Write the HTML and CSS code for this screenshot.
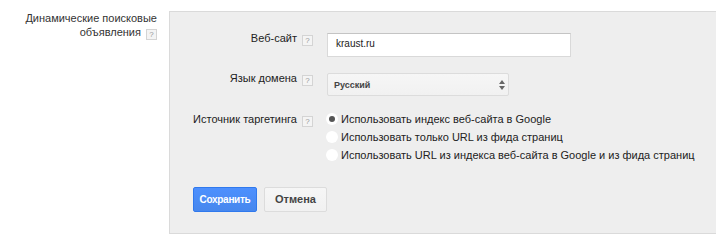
FILE: index.html
```html
<!DOCTYPE html>
<html lang="ru">
<head>
    <meta charset="UTF-8">
    <title>Динамические поисковые объявления</title>
    <link rel="stylesheet" href="styles.css">
</head>
<body>
    <div class="page">
        <div class="side-label">
            Динамические поисковые<br>
            объявления <span class="help">?</span>
        </div>

        <div class="panel">
            <div class="form-row">
                <div class="field-label">Веб-сайт <span class="help">?</span></div>
                <div class="text-input">kraust.ru</div>
            </div>

            <div class="form-row">
                <div class="field-label">Язык домена <span class="help">?</span></div>
                <div class="select">
                    <span>Русский</span>
                    <svg class="select-arrows" width="6" height="10" viewBox="0 0 6 10">
                        <path d="M3 0 L6 4 L0 4 Z" fill="#666"/>
                        <path d="M0 6 L6 6 L3 10 Z" fill="#666"/>
                    </svg>
                </div>
            </div>

            <div class="form-row row-radios">
                <div class="field-label tall">Источник таргетинга <span class="help">?</span></div>
                <div class="radios">
                    <div class="radio-item"><span class="radio checked"></span>Использовать индекс веб-сайта в Google</div>
                    <div class="radio-item"><span class="radio"></span>Использовать только URL из фида страниц</div>
                    <div class="radio-item"><span class="radio"></span>Использовать URL из индекса веб-сайта в Google и из фида страниц</div>
                </div>
            </div>

            <div class="buttons">
                <div class="btn btn-primary">Сохранить</div>
                <div class="btn btn-cancel">Отмена</div>
            </div>
        </div>
    </div>
</body>
</html>
```

FILE: styles.css
```css
body {
    margin: 0;
    background: #fff;
    font-family: 'Liberation Sans', Arial, sans-serif;
    font-size: 11px;
    color: #222;
}

.page {
    display: flex;
    align-items: flex-start;
}

.side-label {
    width: 157px;
    padding-right: 12px;
    margin-top: 11px;
    text-align: right;
    line-height: 14px;
    color: #333;
}

.help {
    display: inline-block;
    box-sizing: border-box;
    width: 11px;
    height: 11px;
    margin-left: 2px;
    border: 1px solid #d4d4d4;
    background: #f4f4f4;
    color: #999;
    font-size: 8px;
    line-height: 9px;
    text-align: center;
    vertical-align: -1px;
}

.panel {
    flex: 1;
    margin-top: 11px;
    background: #eeeeee;
    border: 1px solid #dadada;
    border-right: none;
    padding: 21px 0 21px 0;
}

.form-row {
    display: flex;
    align-items: flex-start;
    margin-bottom: 16px;
}

.row-radios {
    margin-top: -2px;
    margin-bottom: 23px;
}

.field-label {
    width: 143px;
    margin-top: -2px;
    text-align: right;
    line-height: 14px;
    flex-shrink: 0;
}

.field-label.tall {
    margin-top: 0;
    line-height: 18px;
}

.text-input {
    box-sizing: border-box;
    width: 244px;
    height: 24px;
    margin-left: 14px;
    padding-left: 8px;
    background: #fff;
    border: 1px solid #d9d9d9;
    border-top-color: #c4c4c4;
    font-size: 10px;
    line-height: 19px;
    color: #222;
}

.select {
    box-sizing: border-box;
    width: 182px;
    height: 23px;
    margin-left: 14px;
    padding: 0 3px 0 6px;
    display: flex;
    align-items: center;
    justify-content: space-between;
    background: linear-gradient(#f6f6f6, #f1f1f1);
    border: 1px solid #dcdcdc;
    border-radius: 2px;
    font-size: 9px;
    font-weight: bold;
    color: #444;
}

.radios {
    margin-left: 13px;
}

.radio-item {
    display: flex;
    align-items: center;
    line-height: 18px;
    color: #222;
}

.radio {
    position: relative;
    width: 12px;
    height: 12px;
    margin-right: 3px;
    border-radius: 50%;
    background: #fff;
}

.radio.checked::after {
    content: "";
    position: absolute;
    left: 3px;
    top: 3px;
    width: 6px;
    height: 6px;
    border-radius: 50%;
    background: #555;
}

.buttons {
    display: flex;
    gap: 7px;
    margin-left: 23px;
}

.btn {
    box-sizing: border-box;
    height: 25px;
    border: 1px solid #dcdcdc;
    border-radius: 2px;
    background: linear-gradient(#f6f6f6, #f1f1f1);
    color: #444;
    font-size: 11px;
    font-weight: bold;
    line-height: 23px;
    text-align: center;
}

.btn-primary {
    width: 64px;
    border-color: #3079ed;
    background: linear-gradient(#4d90fe, #4787ed);
    color: #fff;
    font-size: 10px;
    letter-spacing: -0.3px;
}

.btn-cancel {
    width: 63px;
}
```
